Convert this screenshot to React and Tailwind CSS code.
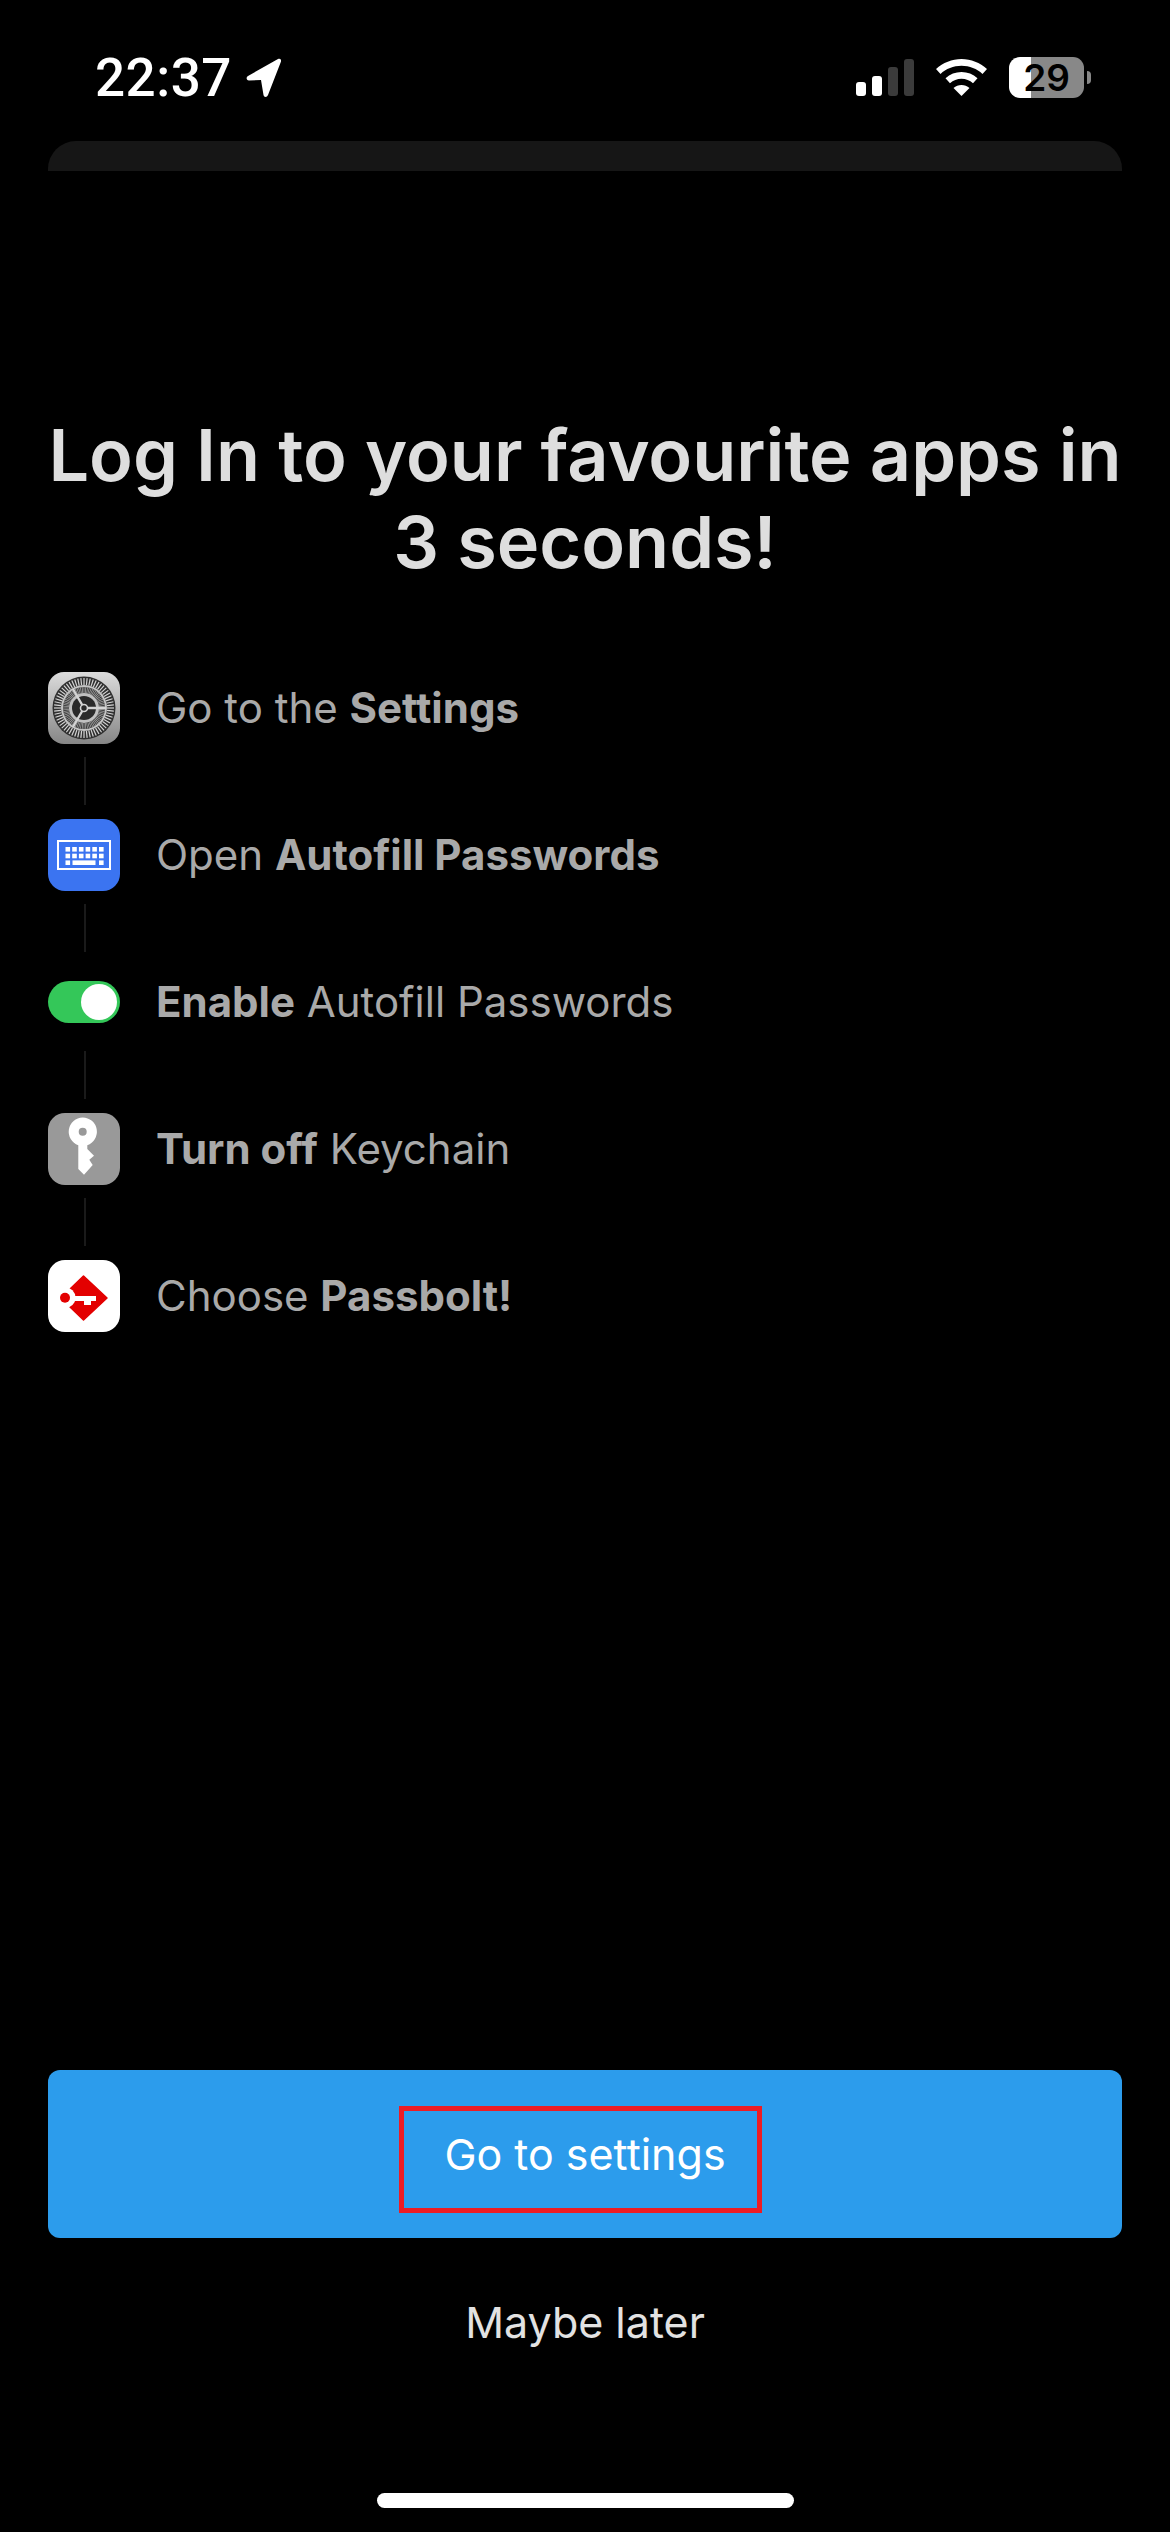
import React from 'react';

const SettingsIcon = () => {
  const ticks = Array.from({ length: 60 }, (_, i) => i * 6);
  const inner = Array.from({ length: 72 }, (_, i) => i * 5);
  return (
    <svg width="72" height="72" viewBox="0 0 72 72" className="rounded-[16px]">
      <defs>
        <linearGradient id="gearBg" x1="0" y1="0" x2="0" y2="1">
          <stop offset="0" stopColor="#dcdcdc" />
          <stop offset="1" stopColor="#868686" />
        </linearGradient>
      </defs>
      <rect width="72" height="72" fill="url(#gearBg)" />
      <circle cx="36" cy="36" r="31.5" fill="#2f2f2f" />
      {ticks.map((a) => (
        <rect key={a} x="35.4" y="6" width="1.2" height="7" fill="#d4d4d4" transform={`rotate(${a} 36 36)`} />
      ))}
      <circle cx="36" cy="36" r="23" fill="#c4c4c4" />
      <circle cx="36" cy="36" r="21" fill="#333" />
      {inner.map((a) => (
        <rect key={a} x="35.6" y="15" width="0.8" height="6" fill="#a0a0a0" transform={`rotate(${a} 36 36)`} />
      ))}
      <circle cx="36" cy="36" r="15" fill="#c0c0c0" />
      <circle cx="36" cy="36" r="12" fill="#2a2a2a" />
      <g stroke="#d4d4d4" strokeWidth="2.4" strokeLinecap="round">
        <line x1="36" y1="36" x2="25.5" y2="18" />
        <line x1="36" y1="36" x2="57" y2="36" />
        <line x1="36" y1="36" x2="25.5" y2="54" />
      </g>
      <circle cx="36" cy="36" r="3.5" fill="#2a2a2a" stroke="#d4d4d4" strokeWidth="1.6" />
    </svg>
  );
};

const KeyboardIcon = () => {
  const keys = [];
  for (let r = 0; r < 2; r++) {
    for (let c = 0; c < 6; c++) {
      keys.push(<rect key={`${r}-${c}`} x={17.5 + c * 6.7} y={28 + r * 6.7} width="4.6" height="4.6" fill="#fff" />);
    }
  }
  return (
    <svg width="72" height="72" viewBox="0 0 72 72">
      <rect width="72" height="72" rx="17" fill="#3b74f1" />
      <rect x="10" y="22" width="52" height="28" fill="none" stroke="#fff" strokeWidth="2" />
      {keys}
      <rect x="17.5" y="41.4" width="4.6" height="4.6" fill="#fff" />
      <rect x="24.5" y="41.4" width="23" height="4.6" fill="#fff" />
      <rect x="51" y="41.4" width="4.6" height="4.6" fill="#fff" />
    </svg>
  );
};

const ToggleIcon = () => (
  <div className="w-[72px] h-[42px] rounded-full bg-[#34c759] flex items-center justify-end pr-[3px]">
    <div className="w-[36px] h-[36px] rounded-full bg-white" />
  </div>
);

const KeyIcon = () => (
  <svg width="72" height="72" viewBox="0 0 72 72">
    <rect width="72" height="72" rx="17" fill="#999999" />
    <path
      fillRule="evenodd"
      fill="#fff"
      d="M34.7 4.4a14.3 14.3 0 0 1 4.6 27.8V36L46 42.7 41.3 46.7 44.7 52 36 61.7 30.3 56V32.2A14.3 14.3 0 0 1 34.7 4.4ZM34.7 14.7a4 4 0 1 0 0 8 4 4 0 0 0 0-8Z"
    />
  </svg>
);

const PassboltIcon = () => (
  <svg width="72" height="72" viewBox="0 0 72 72">
    <rect width="72" height="72" rx="17" fill="#fff" />
    <path fill="#e30000" stroke="#e30000" strokeWidth="1.5" strokeLinejoin="round" d="M35.5 16 59 38 35.5 60 22 47V29Z" />
    <circle cx="17" cy="37.7" r="10.5" fill="#fff" />
    <circle cx="17" cy="37.7" r="5" fill="#e30000" />
    <rect x="24" y="36" width="24" height="5" fill="#fff" />
    <rect x="36" y="40" width="7" height="5" fill="#fff" />
  </svg>
);

const steps = [
  { icon: <SettingsIcon />, text: <>Go to the <b>Settings</b></> },
  { icon: <KeyboardIcon />, text: <>Open <b>Autofill Passwords</b></> },
  { icon: <ToggleIcon />, text: <><b>Enable</b> Autofill Passwords</> },
  { icon: <KeyIcon />, text: <><b>Turn off</b> Keychain</> },
  { icon: <PassboltIcon />, text: <>Choose <b>Passbolt!</b></> },
];

const StatusBar = () => (
  <div className="h-[141px] flex items-start justify-between pt-[48px] pl-[95px] pr-[79px]">
    <div className="flex items-center gap-[14px]">
      <span className="text-white text-[53px] leading-[60px] tracking-[0.5px] font-medium font-['Roboto',sans-serif]">22:37</span>
      <svg width="36" height="40" viewBox="0 0 36 40">
        <path fill="#fff" d="M2 18 32 1c2-1 3.500.2 3 2.500L22 37c-1 2.500-4 2.500-4.500 0L15 22 3 22.500C0 22.500 0 19 2 18Z" />
      </svg>
    </div>
    <div className="flex items-center gap-[22px] h-[41px] mt-[9px]">
      <div className="flex items-end gap-[6px] h-[37px]">
        <div className="w-[10px] h-[14px] rounded-[3px] bg-white" />
        <div className="w-[10px] h-[20px] rounded-[3px] bg-white" />
        <div className="w-[10px] h-[29px] rounded-[3px] bg-[#3b3b3b]" />
        <div className="w-[10px] h-[37px] rounded-[3px] bg-[#3b3b3b]" />
      </div>
      <svg width="51" height="37" viewBox="0 0 51 37">
        <path fill="#fff" d="M25.500 0C35 0 44 3.700 51 10l-4.500 5C41 9.800 33.500 6.800 25.500 6.800S10 9.800 4.500 15L0 10C7 3.700 16 0 25.500 0ZM25.500 13c6 0 11.500 2.200 16 6.200l-4.500 5c-3.200-2.800-7.200-4.400-11.500-4.400S17.200 21.400 14 24.200l-4.500-5C14 15.200 19.500 13 25.500 13ZM25.500 26c3 0 5.700 1 8 3l-8 8-8-8c2.300-2 5-3 8-3Z" />
      </svg>
      <div className="flex items-center gap-[3px]">
        <div className="w-[75px] h-[41px] rounded-[11px] bg-[linear-gradient(90deg,#fff_29%,#888_29%)] flex items-center justify-center text-black text-[37px] font-semibold leading-none font-['Inter',sans-serif]">
          29
        </div>
        <div className="w-[4px] h-[13px] rounded-r-full bg-[#888]" />
      </div>
    </div>
  </div>
);

export default function App() {
  return (
    <div className="w-[1170px] h-[2532px] bg-black flex flex-col font-['Inter',sans-serif]">
      <StatusBar />
      <div className="mx-[48px] h-[30px] bg-[#161616] rounded-t-[28px]" />

      <h1 className="mt-[240px] px-[40px] text-center text-[#dedede] text-[72px] leading-[87px] font-semibold">
        Log In to your favourite apps in 3 seconds!
      </h1>

      <div className="mt-[86px] px-[48px] flex flex-col">
        {steps.map((step, i) => (
          <div key={i}>
            {i > 0 && <div className="ml-[36px] w-[2px] h-[48px] my-[13px] bg-[#1a1a1a]" />}
            <div className="h-[73px] flex items-center gap-[36px]">
              <div className="w-[72px] flex justify-center shrink-0">{step.icon}</div>
              <span className="text-[42px] text-[#a9a9a9]">{step.text}</span>
            </div>
          </div>
        ))}
      </div>

      <div className="mt-auto mx-[48px] h-[168px] rounded-[12px] bg-[#2c9cec] flex items-center justify-center pt-[11px] pr-[9px]">
        <div className="w-[363px] h-[107px] border-[5px] border-[#ed1c24] flex items-center justify-center pl-[9px] pb-[11px] text-white text-[43px]">
          Go to settings
        </div>
      </div>
      <div className="h-[170px] flex justify-center items-center pb-[2px] text-[#e2e2e2] text-[43px]">Maybe later</div>
      <div className="h-[124px] flex justify-center pt-[85px]">
        <div className="w-[417px] h-[15px] rounded-full bg-white" />
      </div>
    </div>
  );
}
